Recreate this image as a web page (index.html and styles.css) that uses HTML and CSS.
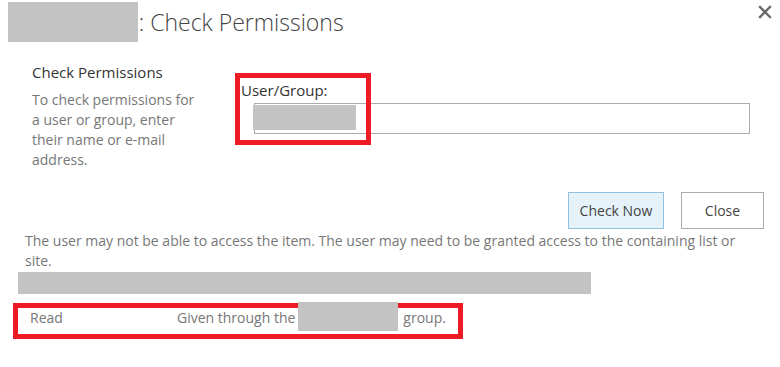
FILE: index.html
```html
<!DOCTYPE html>
<html lang="en">
<head>
  <meta charset="UTF-8" />
  <title>Check Permissions</title>
  <link rel="stylesheet" href="styles.css">
</head>
<body>

  <div class="dialog">
    <div class="title-bar">
      <h1 class="title"><span class="redact title-redact"></span><span class="title-text">s: Check Permissions</span></h1>
      <button class="close-x" title="Close">
        <svg width="14" height="14" viewBox="0 0 14 14">
          <path d="M2 2 L12 12 M12 2 L2 12" stroke="#6b6b6b" stroke-width="2.4" stroke-linecap="square" fill="none"/>
        </svg>
      </button>
    </div>

    <div class="section">
      <div class="section-info">
        <h2>Check Permissions</h2>
        <p>To check permissions for a user or group, enter their name or e-mail address.</p>
      </div>
      <div class="field">
        <div class="mark mark-field"></div>
        <label for="userGroup">User/Group:</label>
        <div class="people-picker" id="userGroup">
          <span class="redact picker-redact"></span>
        </div>
      </div>
    </div>

    <div class="actions">
      <button class="btn btn-primary">Check Now</button>
      <button class="btn">Close</button>
    </div>

    <div class="result">
      <p class="result-msg">The user may not be able to access the item. The user may need to be granted access to the containing list or site.</p>
      <div class="redact result-redact"></div>
      <div class="perm-row">
        <span class="perm-level">Read</span>
        <span class="perm-source">Given through the</span>
        <span class="redact group-redact"></span>
        <span class="perm-group">group.</span>
      </div>
    </div>
  </div>

</body>
</html>
```

FILE: styles.css
```css
:root {
  --text: #444;
  --muted: #777;
  --border: #ababab;
  --redact: #c3c3c3;
  --mark: #ed1c24;
}

* {
  margin: 0; padding: 0; box-sizing: border-box;
  font-family: 'Open Sans', 'Noto Sans', sans-serif;
}

body {
  background: #fff;
  color: var(--text);
  width: 780px;
  height: 367px;
  overflow: hidden;
}

.redact {
  display: inline-block;
  background: var(--redact);
}

/* title */
.title-bar {
  display: flex;
  justify-content: space-between;
  align-items: flex-start;
  height: 48px;
  padding: 2px 8px 0 8px;
}

.title {
  display: flex;
  font-weight: 300;
  font-size: 23px;
  line-height: 40px;
  color: #444;
}

.title-redact {
  width: 130px;
  height: 40px;
  position: relative;
  z-index: 1;
}

.title-text {
  margin-left: -10px;
}

.close-x {
  background: none;
  border: none;
  margin-top: 3px;
  cursor: pointer;
}

/* user/group section */
.section {
  display: flex;
  padding-left: 32px;
  padding-top: 14px;
}

.section-info {
  width: 203px;
}

.section-info h2 {
  font-size: 15px;
  font-weight: 400;
  line-height: 20px;
  color: #333;
  margin-bottom: 8px;
}

.section-info p {
  width: 168px;
  font-size: 14px;
  line-height: 20px;
  color: var(--muted);
}

.field {
  position: relative;
  padding-top: 18px;
  padding-left: 6px;
}

.field label {
  display: block;
  font-size: 15px;
  line-height: 20px;
  color: #333;
}

.people-picker {
  margin-top: 3px;
  margin-left: 13px;
  width: 496px;
  height: 31px;
  border: 1px solid var(--border);
}

.picker-redact {
  width: 103px;
  height: 25px;
  margin: 1px 0 0 -2px;
}

.mark {
  position: absolute;
  border: 5px solid var(--mark);
}

.mark-field {
  left: 0;
  top: 11px;
  width: 136px;
  height: 72px;
}

/* buttons */
.actions {
  display: flex;
  justify-content: flex-end;
  gap: 17px;
  padding-right: 16px;
  margin-top: 22px;
}

.btn {
  height: 37px;
  padding: 0;
  width: 83px;
  background: #fff;
  border: 1px solid var(--border);
  font-size: 14px;
  white-space: nowrap;
  color: #444;
  cursor: pointer;
}

.btn-primary {
  width: 96px;
  background: #e6f2fa;
  border-color: #92c0e0;
}

/* result */
.result {
  padding-left: 18px;
}

.result-msg {
  padding-left: 7px;
  margin-top: 2px;
  width: 740px;
  font-size: 14px;
  line-height: 20px;
  color: var(--muted);
}

.result-redact {
  display: block;
  width: 573px;
  height: 22px;
  margin-top: 1px;
}

.perm-row {
  display: flex;
  align-items: flex-start;
  width: 450px;
  height: 36px;
  margin: 9px 0 0 -5px;
  padding-left: 12px;
  border: 5px solid var(--mark);
  font-size: 14px;
  line-height: 20px;
  color: var(--muted);
}

.perm-level {
  width: 147px;
}

.group-redact {
  width: 100px;
  height: 29px;
  margin: -6px 5px 0 3px;
}
```
